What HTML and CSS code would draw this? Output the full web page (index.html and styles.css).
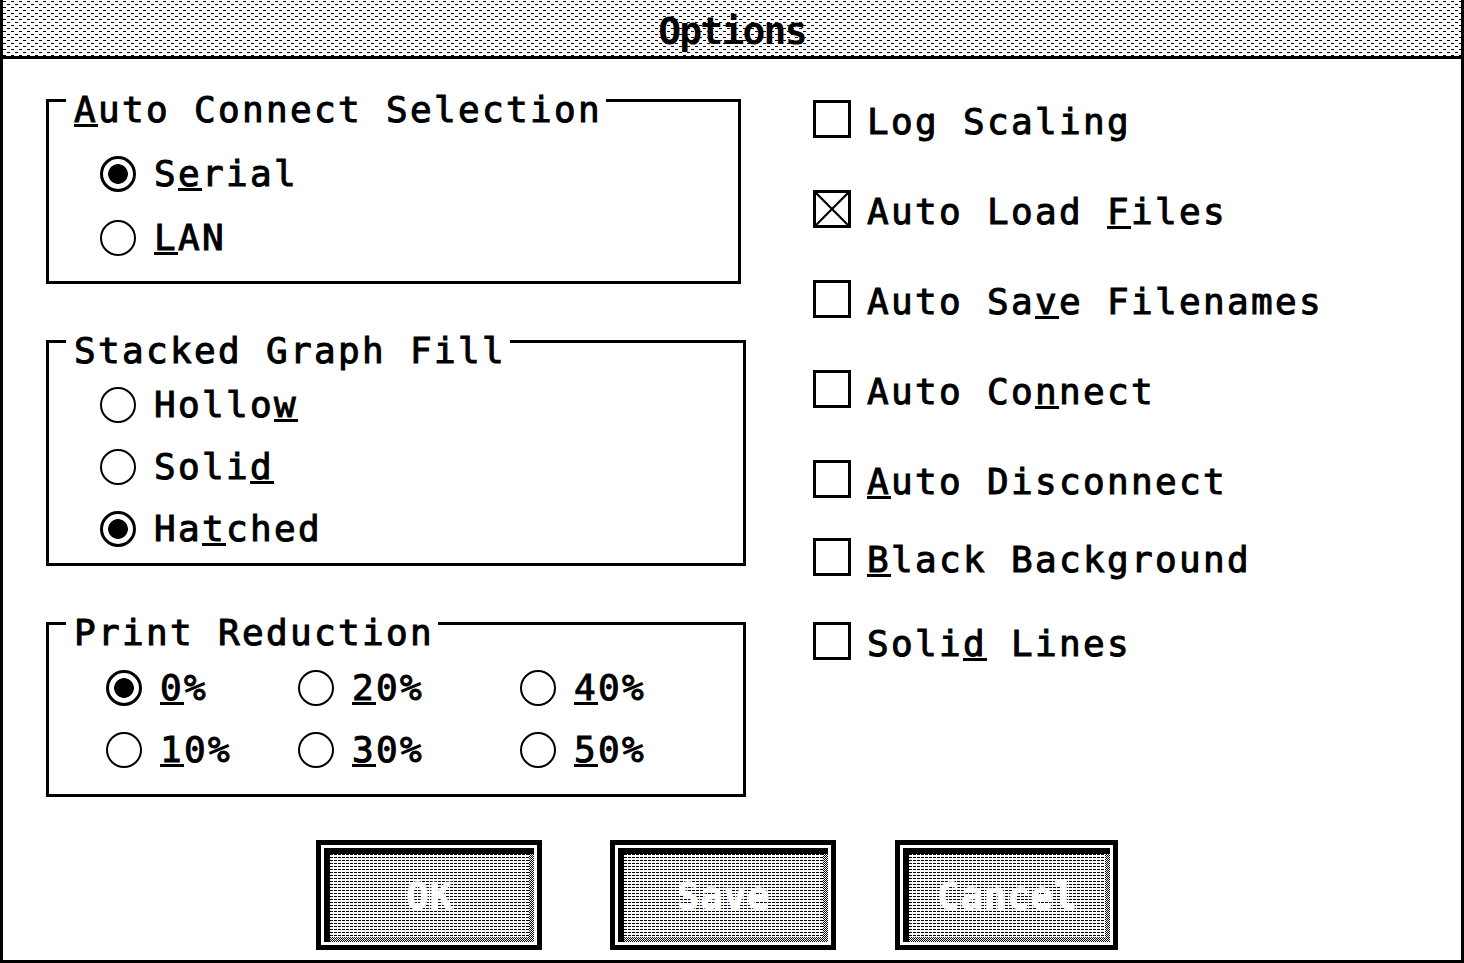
FILE: index.html
```html
<!DOCTYPE html>
<html>
<head>
<meta charset="utf-8">
<title>Options</title>
<link rel="stylesheet" href="styles.css">
</head>
<body>
<div class="dialog">
  <div class="titlebar"><span class="title">Options</span></div>
  <div class="body">
    <div class="main">
      <div class="left">
        <div class="group g1">
          <div class="group-title"><u>A</u>uto Connect Selection</div>
          <div class="opts">
            <div class="opt"><span class="radio on"></span><span>S<u>e</u>rial</span></div>
            <div class="opt"><span class="radio"></span><span><u>L</u>AN</span></div>
          </div>
        </div>
        <div class="group g2">
          <div class="group-title">Stacked Graph Fill</div>
          <div class="opts">
            <div class="opt"><span class="radio"></span><span>Hollo<u>w</u></span></div>
            <div class="opt"><span class="radio"></span><span>Soli<u>d</u></span></div>
            <div class="opt"><span class="radio on"></span><span>Ha<u>t</u>ched</span></div>
          </div>
        </div>
        <div class="group g3">
          <div class="group-title">Print Reduction</div>
          <div class="opts grid">
            <div class="opt"><span class="radio on"></span><span><u>0</u>%</span></div>
            <div class="opt"><span class="radio"></span><span><u>2</u>0%</span></div>
            <div class="opt"><span class="radio"></span><span><u>4</u>0%</span></div>
            <div class="opt"><span class="radio"></span><span><u>1</u>0%</span></div>
            <div class="opt"><span class="radio"></span><span><u>3</u>0%</span></div>
            <div class="opt"><span class="radio"></span><span><u>5</u>0%</span></div>
          </div>
        </div>
      </div>
      <div class="checks">
        <div class="chk"><span class="cbox"></span><span class="chk-label">Log Scaling</span></div>
        <div class="chk"><span class="cbox"><svg class="xmark" viewBox="0 0 32 32" width="32" height="32"><line x1="0" y1="0" x2="32" y2="32"/><line x1="32" y1="0" x2="0" y2="32"/></svg></span><span class="chk-label">Auto Load <u>F</u>iles</span></div>
        <div class="chk"><span class="cbox"></span><span class="chk-label">Auto Sa<u>v</u>e Filenames</span></div>
        <div class="chk"><span class="cbox"></span><span class="chk-label">Auto Co<u>n</u>nect</span></div>
        <div class="chk"><span class="cbox"></span><span class="chk-label"><u>A</u>uto Disconnect</span></div>
        <div class="chk near"><span class="cbox"></span><span class="chk-label"><u>B</u>lack Background</span></div>
        <div class="chk mid"><span class="cbox"></span><span class="chk-label">Soli<u>d</u> Lines</span></div>
      </div>
    </div>
    <div class="buttons">
      <div class="btn"><div class="btn-face"><div class="btn-fill">OK</div></div></div>
      <div class="btn btn-save"><div class="btn-face"><div class="btn-fill">Save</div></div></div>
      <div class="btn btn-cancel"><div class="btn-face"><div class="btn-fill">Cancel</div></div></div>
    </div>
  </div>
</div>
</body>
</html>
```
FILE: styles.css
```css
* { box-sizing: border-box; }
html, body { margin: 0; padding: 0; background: #fff; }
body {
  width: 1464px;
  height: 963px;
  overflow: hidden;
  font-family: "DejaVu Sans Mono", monospace;
  font-size: 36px;
  letter-spacing: 2.33px;
  color: #000;
  -webkit-text-stroke: 1px #000;
}
u {
  text-decoration: underline;
  text-decoration-thickness: 3px;
  text-underline-offset: 2px;
}
.dialog {
  width: 1464px;
  height: 963px;
  border: 3px solid #000;
  border-top: 0;
  display: flex;
  flex-direction: column;
}
.titlebar {
  flex: none;
  height: 59px;
  padding-top: 5px;
  border-bottom: 3px solid #000;
  display: flex;
  align-items: center;
  justify-content: center;
  background-color: #fff;
  background-image:
    conic-gradient(at 3px 1px, transparent 270deg, #000 0),
    conic-gradient(at 3px 1px, transparent 270deg, #000 0);
  background-size: 8px 6px;
  background-position: 0 1px, 4px 4px;
}
.title {
  font-weight: bold;
  font-size: 38px;
  letter-spacing: -1.8px;
  line-height: 1;
  -webkit-text-stroke: 0;
}
.body {
  flex: 1;
  display: flex;
  flex-direction: column;
}
.main {
  display: flex;
  padding: 40px 0 0 43px;
}
.left {
  width: 700px;
  flex: none;
  display: flex;
  flex-direction: column;
  gap: 56px;
}
.group {
  border: 3px solid #000;
}
.g1 { width: 695px; padding-bottom: 25px; }
.g2 { width: 700px; padding-bottom: 16px; }
.g3 { width: 700px; padding-bottom: 26px; }
.group-title {
  width: fit-content;
  margin: -10px 0 0 17px;
  padding: 0 4px 0 8px;
  background: #fff;
  line-height: 36px;
  height: 36px;
}
.opts {
  display: flex;
  flex-direction: column;
  padding-left: 51px;
}
.g1 .opts { margin-top: 28px; gap: 28px; }
.g2 .opts { margin-top: 18px; gap: 26px; }
.opts.grid {
  display: grid;
  grid-template-columns: 192px 222px auto;
  row-gap: 26px;
  margin-top: 19px;
  padding-left: 57px;
}
.opt {
  display: flex;
  align-items: center;
  gap: 18px;
  height: 36px;
  line-height: 36px;
  white-space: nowrap;
}
.radio {
  flex: none;
  width: 36px;
  height: 36px;
  border-radius: 50%;
  border: 2px solid #000;
  background: #fff;
}
.radio.on {
  border-width: 3px;
  background: radial-gradient(circle, #000 0 9.5px, #fff 10.2px);
}
.checks {
  margin-left: 67px;
  padding-top: 1px;
  display: flex;
  flex-direction: column;
}
.chk {
  display: flex;
  align-items: center;
  gap: 16px;
  height: 38px;
  line-height: 36px;
  white-space: nowrap;
  margin-top: 52px;
}
.chk:first-child { margin-top: 0; }
.chk.near { margin-top: 40px; }
.chk.mid { margin-top: 46px; }
.cbox {
  flex: none;
  width: 38px;
  height: 38px;
  border: 3px solid #000;
  display: block;
}
.xmark { display: block; }
.xmark line { stroke: #000; stroke-width: 2.2; }
.chk-label { margin-top: 6px; }
.buttons {
  display: flex;
  margin-top: 43px;
  padding-left: 313px;
}
.btn {
  flex: none;
  width: 226px;
  height: 110px;
  border: 5px solid #000;
  background: #fff;
  padding: 3px;
}
.btn-save { margin-left: 68px; }
.btn-cancel { margin-left: 59px; width: 223px; }
.btn-face {
  height: 100%;
  border-top: 6px solid #000;
  border-left: 6px solid #000;
  padding: 0 5px 5px 0;
  background-color: #fff;
  background-image: repeating-conic-gradient(#000 0 25%, #fff 0 50%);
  background-size: 2px 2px;
}
.btn-fill {
  height: 100%;
  display: flex;
  align-items: center;
  justify-content: center;
  color: #fff;
  font-weight: bold;
  font-size: 38px;
  letter-spacing: 0.5px;
  -webkit-text-stroke: 0.6px #fff;
  background-color: #fff;
  background-image: conic-gradient(at 3px 1px, transparent 270deg, #000 0);
  background-size: 4px 3px;
}
```
